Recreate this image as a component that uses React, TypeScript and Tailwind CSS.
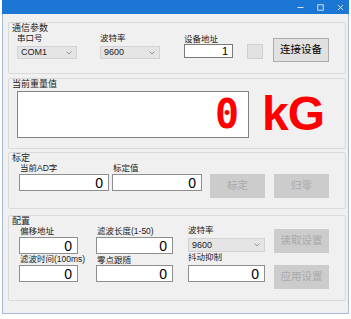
import React from 'react';

const ui = "font-['Liberation_Sans','Noto_Sans_CJK_SC',sans-serif]";

const Chevron: React.FC = () => (
  <svg width="6" height="4" viewBox="0 0 6 4" className="mr-[4px]">
    <path d="M0.5 0.5 L3 3 L5.5 0.5" fill="none" stroke="#8a8a8a" strokeWidth="0.9" />
  </svg>
);

const Combo: React.FC<{ value: string; className: string }> = ({ value, className }) => (
  <div className={`flex items-center justify-between bg-[#e5e5e5] border border-[#d2d2d2] ${className}`}>
    <span className="pl-[3px] text-[9px] leading-none text-[#222]">{value}</span>
    <Chevron />
  </div>
);

const Field: React.FC<{ value: string; className: string }> = ({ value, className }) => (
  <div className={`flex items-center justify-end bg-white border border-[#8e8e8e] pr-[5px] text-[14px] leading-none text-black ${className}`}>
    {value}
  </div>
);

const Caption: React.FC<{ text: string; className?: string }> = ({ text, className = '' }) => (
  <div className={`text-[8.5px] leading-[9px] text-[#222] whitespace-nowrap ${className}`}>{text}</div>
);

const DisabledButton: React.FC<{ text: string; className: string }> = ({ text, className }) => (
  <div className={`flex items-center justify-center bg-[#cccccc] text-[10.5px] text-[#a9a9a9] ${className}`}>
    {text}
  </div>
);

const Group: React.FC<{ title: string; className: string; children: React.ReactNode }> = ({ title, className, children }) => (
  <div className={`ml-[5px] w-[338px] border border-[#dadada] rounded-[2px] ${className}`}>
    <div className="ml-[3px] text-[9px] leading-[11px] text-[#222]">{title}</div>
    {children}
  </div>
);

const App: React.FC = () => {
  return (
    <div className={`w-[351px] h-[319px] bg-white ${ui}`}>
      <div className="ml-[2px] w-[347px] h-[314px] flex flex-col bg-[#f0f0f0] border-x border-b border-[#a8bbd4]">
        {/* title bar */}
        <div className="h-[14px] bg-[#1b76d4] flex items-center justify-end pr-[5px] gap-[13px] -mx-px">
          <svg width="7" height="7" viewBox="0 0 7 7">
            <path d="M0.5 3.5 H6.5" stroke="#fff" strokeWidth="0.8" />
          </svg>
          <svg width="7" height="7" viewBox="0 0 7 7">
            <rect x="0.8" y="0.8" width="5.4" height="5.4" fill="none" stroke="#fff" strokeWidth="0.8" />
          </svg>
          <svg width="7" height="7" viewBox="0 0 7 7">
            <path d="M1 1 L6 6 M6 1 L1 6" stroke="#fff" strokeWidth="0.8" />
          </svg>
        </div>

        {/* 通信参数 */}
        <Group title="通信参数" className="mt-[8px] h-[52px]">
          <div className="flex items-start ml-[8px]">
            <div className="w-[60px]">
              <Caption text="串口号" />
              <Combo value="COM1" className="mt-[3px] h-[13px] w-[60px]" />
            </div>
            <div className="w-[60px] ml-[23px]">
              <Caption text="波特率" />
              <Combo value="9600" className="mt-[3px] h-[13px] w-[60px]" />
            </div>
            <div className="w-[49px] ml-[24px]">
              <Caption text="设备地址" className="mt-[1px]" />
              <div className="flex items-center justify-end bg-white border border-[#7a7a7a] pr-[4px] h-[14px] w-[49px] text-[11px] leading-none">
                1
              </div>
            </div>
            <div className="ml-[14px] mt-[10px] w-[16px] h-[15px] bg-[#e2e2e2] border border-[#cfcfcf]" />
            <div className="ml-[10px] mt-[4px] w-[56px] h-[24px] flex items-center justify-center bg-[#e1e1e1] border border-[#adadad] text-[10.5px] text-black">
              连接设备
            </div>
          </div>
        </Group>

        {/* 当前重量值 */}
        <Group title="当前重量值" className="mt-[4px] h-[71px]">
          <div className="flex items-center ml-[8px]">
            <div className="w-[232px] h-[47px] bg-white border border-[#828282] flex items-center justify-end pr-[9px]">
              <span className="font-['DejaVu_Sans_Mono',monospace] font-bold text-[40px] leading-[40px] text-[#f00]">0</span>
            </div>
            <span className="ml-[13px] font-['Liberation_Sans',sans-serif] font-bold text-[48px] leading-none text-[#f00] tracking-[-1px]">kG</span>
          </div>
        </Group>

        {/* 标定 */}
        <Group title="标定" className="mt-[3px] h-[57px]">
          <div className="flex items-start ml-[10px]">
            <div className="w-[90px]">
              <Caption text="当前AD字" className="ml-[1px] h-[10px]" />
              <Field value="0" className="w-[90px] h-[17px]" />
            </div>
            <div className="w-[90px] ml-[3px]">
              <Caption text="标定值" className="ml-[1px] h-[10px]" />
              <Field value="0" className="w-[90px] h-[17px]" />
            </div>
            <DisabledButton text="标定" className="ml-[8px] mt-[10px] w-[55px] h-[24px]" />
            <DisabledButton text="归零" className="ml-[9px] mt-[10px] w-[55px] h-[24px]" />
          </div>
        </Group>

        {/* 配置 */}
        <Group title="配置" className="mt-[6px] h-[86px]">
          <div className="flex items-start ml-[10px]">
            <div className="w-[59px]">
              <Caption text="偏移地址" className="ml-[1px] h-[10px]" />
              <Field value="0" className="w-[59px] h-[17px]" />
              <Caption text="滤波时间(100ms)" className="ml-[1px] h-[11px] pt-[1px]" />
              <Field value="0" className="w-[59px] h-[17px]" />
            </div>
            <div className="w-[77px] ml-[18px]">
              <Caption text="滤波长度(1-50)" className="ml-[1px] h-[10px]" />
              <Field value="0" className="w-[77px] h-[17px]" />
              <Caption text="零点跟随" className="ml-[1px] h-[11px] pt-[2px]" />
              <Field value="0" className="w-[77px] h-[17px]" />
            </div>
            <div className="w-[77px] ml-[15px]">
              <Caption text="波特率" className="h-[10px] -mt-[1px]" />
              <Combo value="9600" className="mt-[2px] h-[14px] w-[77px]" />
              <Caption text="抖动抑制" className="h-[13px] pt-[1px]" />
              <Field value="0" className="w-[77px] h-[17px]" />
            </div>
            <div className="w-[55px] ml-[9px]">
              <DisabledButton text="读取设置" className="mt-[2px] w-[55px] h-[24px]" />
              <DisabledButton text="应用设置" className="mt-[12px] w-[55px] h-[24px]" />
            </div>
          </div>
        </Group>
      </div>
    </div>
  );
};

export default App;
